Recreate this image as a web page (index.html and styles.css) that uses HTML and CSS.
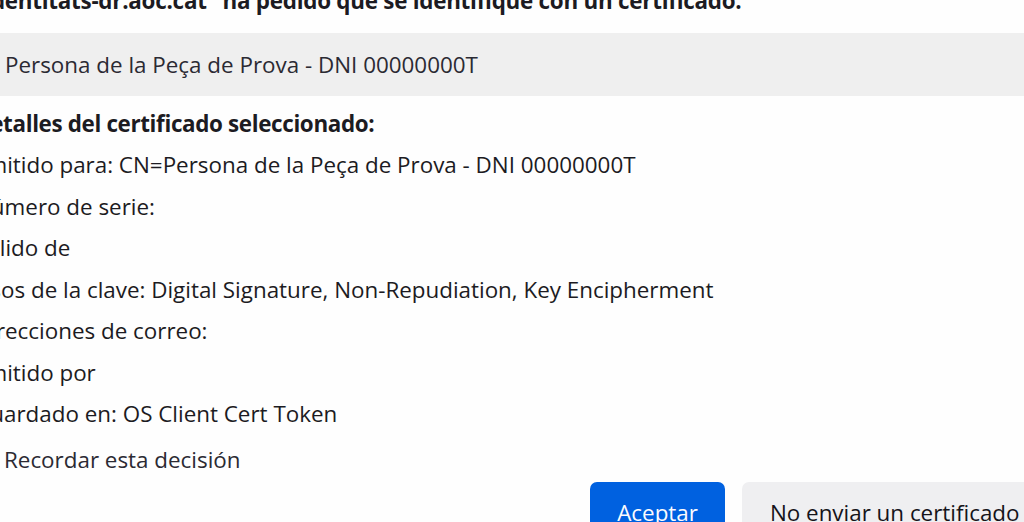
FILE: index.html
```html
<!DOCTYPE html>
<html lang="es">
<head>
<meta charset="utf-8">
<title>Identificación con certificado</title>
<link rel="stylesheet" href="styles.css">
</head>
<body>
<div class="dialog">
  <p class="title">"identitats-dr.aoc.cat" ha pedido que se identifique con un certificado:</p>
  <div class="listbox">
    <div class="option">Persona de la Peça de Prova - DNI 00000000T</div>
  </div>
  <div class="details">
    <p class="row strong">Detalles del certificado seleccionado:</p>
    <p class="row">Emitido para: CN=Persona de la Peça de Prova - DNI 00000000T</p>
    <p class="row">Número de serie:</p>
    <p class="row">Válido de</p>
    <p class="row">Usos de la clave: Digital Signature, Non-Repudiation, Key Encipherment</p>
    <p class="row">Direcciones de correo:</p>
    <p class="row">Emitido por</p>
    <p class="row">Guardado en: OS Client Cert Token</p>
  </div>
  <label class="remember"><span class="checkbox"></span>Recordar esta decisión</label>
  <div class="buttons">
    <button class="btn primary">Aceptar</button>
    <button class="btn">No enviar un certificado</button>
  </div>
</div>
</body>
</html>
```
FILE: styles.css
```css
html, body {
  margin: 0;
  padding: 0;
  background: #fefefe;
  overflow: hidden;
  height: 522px;
}
body {
  font-family: "Open Sans", "Noto Sans", sans-serif;
  font-size: 22.4px;
  color: #1c1b22;
}
.dialog {
  margin-left: -26px;
  width: 1073px;
  margin-top: -20.5px;
}
p { margin: 0; }
.title {
  font-weight: 700;
  line-height: 41.5px;
  white-space: nowrap;
  letter-spacing: -0.25px;
}
.listbox {
  margin-top: 12px;
  background: #efefef;
  height: 63px;
  display: flex;
  align-items: center;
  margin-right: -40px;
}
.option {
  padding-left: 31px;
  color: #2b2a33;
}
.details {
  margin-top: 6.5px;
}
.row {
  line-height: 41.5px;
  white-space: nowrap;
}
.strong {
  font-weight: 700;
  letter-spacing: -0.35px;
}
.remember {
  display: flex;
  align-items: center;
  gap: 9px;
  height: 41.5px;
  margin-top: 4px;
  color: #2b2a33;
}
.checkbox {
  width: 19px;
  height: 19px;
  border: 1px solid #8f8f9d;
  border-radius: 3px;
  background: #fff;
}
.buttons {
  display: flex;
  justify-content: flex-end;
  gap: 17px;
  margin-top: 1.5px;
}
.btn {
  font: inherit;
  height: 61px;
  padding: 0 27.5px;
  border: none;
  border-radius: 7px;
  background: #efeff1;
  color: #15141a;
  white-space: nowrap;
}
.btn.primary {
  background: #0061e0;
  color: #fbfbfe;
}
```
